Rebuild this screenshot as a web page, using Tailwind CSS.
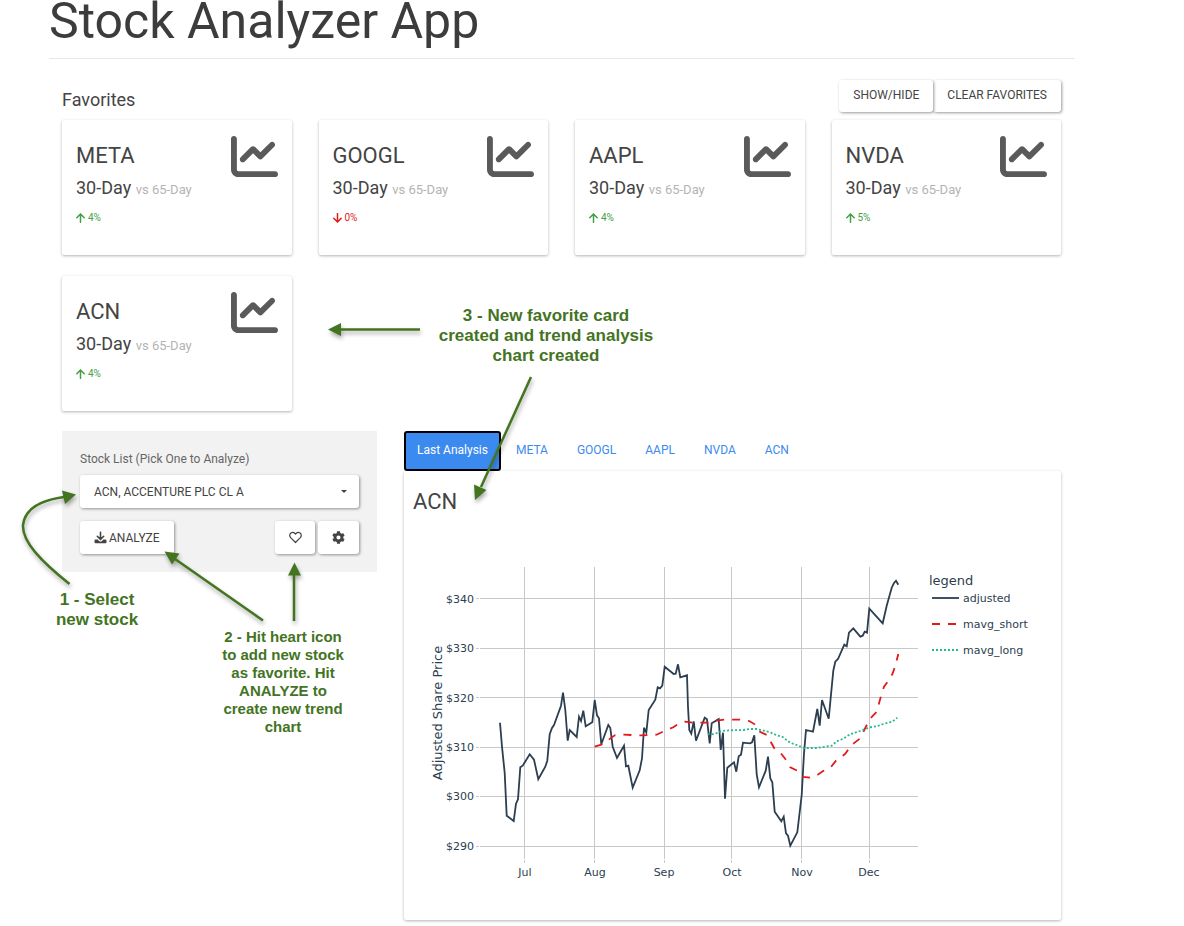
<!DOCTYPE html>
<html lang="en">

<head>
    <meta charset="UTF-8">
    <meta name="viewport" content="width=device-width, initial-scale=1.0">
    <title>Stock Analyzer App</title>
    <script src="https://cdn.jsdelivr.net/npm/@tailwindcss/browser@4"></script>
</head>

<body class="relative bg-white font-[Roboto,sans-serif] text-[#444]">

<!-- shared icons -->
<svg class="hidden">
    <symbol id="chart-line" viewBox="0 0 512 512">
        <path fill="currentColor" d="M64 64c0-17.7-14.3-32-32-32S0 46.3 0 64V400c0 44.2 35.8 80 80 80H480c17.7 0 32-14.3 32-32s-14.3-32-32-32H80c-8.8 0-16-7.2-16-16V64zm406.6 86.6c12.5-12.5 12.5-32.8 0-45.3s-32.8-12.5-45.3 0L320 210.7l-57.4-57.4c-12.5-12.5-32.8-12.5-45.3 0l-112 112c-12.5 12.5-12.5 32.8 0 45.3s32.8 12.5 45.3 0L240 221.3l57.4 57.4c12.5 12.5 32.8 12.5 45.3 0l128-128z"/>
    </symbol>
    <symbol id="arrow-up" viewBox="0 0 10 10">
        <path fill="none" stroke="currentColor" stroke-width="1.5" stroke-linecap="round" stroke-linejoin="round" d="M4.500 9.300V1M.8 4.800L4.500 .9l3.700 3.900"/>
    </symbol>
    <symbol id="arrow-down" viewBox="0 0 10 10">
        <path fill="none" stroke="currentColor" stroke-width="1.5" stroke-linecap="round" stroke-linejoin="round" d="M4.500 .7V9M.8 5.200l3.700 3.900 3.700-3.900"/>
    </symbol>
</svg>

<div class="pl-[49px] pr-[109px] pb-[6px]">
    <h1 class="border-b border-[#e8e8e8] pb-4 text-[50px] leading-[42px] text-[#3c3c3c]">Stock Analyzer App</h1>

    <main class="pl-[13px] pr-[14px] pt-[21px]">
        <!-- favorites -->
        <div class="mb-2 flex items-end justify-between">
            <h2 class="text-lg leading-6">Favorites</h2>
            <div class="flex">
                <button class="relative z-10 h-8 rounded-[3px] bg-white px-[14px] pb-[2px] text-xs shadow-[1px_1px_3px_rgba(0,0,0,0.4)]">SHOW/HIDE</button>
                <button class="h-8 rounded-[3px] bg-white px-[14px] pb-[2px] text-xs shadow-[1px_1px_3px_rgba(0,0,0,0.4)]">CLEAR FAVORITES</button>
            </div>
        </div>

        <section class="grid grid-cols-4 gap-x-[27px] gap-y-[21px]">
            <article class="flex justify-between rounded-[2px] bg-white px-[14px] pt-[21px] pb-6 shadow-[0_1px_3px_rgba(0,0,0,0.3)]">
                <div>
                    <h3 class="text-[22px] leading-[30px]">META</h3>
                    <p class="text-lg leading-[34px]">30-Day <span class="text-[13px] leading-none text-[#b4b4b4]">vs 65-Day</span></p>
                    <p class="flex items-center gap-[2px] text-[10px] leading-[26px] text-[#43a047]"><svg class="size-[10px]"><use href="#arrow-up"/></svg>4%</p>
                </div>
                <svg class="-mt-2 size-[47px] text-[#5a5a5a]"><use href="#chart-line"/></svg>
            </article>
            <article class="flex justify-between rounded-[2px] bg-white px-[14px] pt-[21px] pb-6 shadow-[0_1px_3px_rgba(0,0,0,0.3)]">
                <div>
                    <h3 class="text-[22px] leading-[30px]">GOOGL</h3>
                    <p class="text-lg leading-[34px]">30-Day <span class="text-[13px] leading-none text-[#b4b4b4]">vs 65-Day</span></p>
                    <p class="flex items-center gap-[2px] text-[10px] leading-[26px] text-[#e31a1c]"><svg class="size-[10px]"><use href="#arrow-down"/></svg>0%</p>
                </div>
                <svg class="-mt-2 size-[47px] text-[#5a5a5a]"><use href="#chart-line"/></svg>
            </article>
            <article class="flex justify-between rounded-[2px] bg-white px-[14px] pt-[21px] pb-6 shadow-[0_1px_3px_rgba(0,0,0,0.3)]">
                <div>
                    <h3 class="text-[22px] leading-[30px]">AAPL</h3>
                    <p class="text-lg leading-[34px]">30-Day <span class="text-[13px] leading-none text-[#b4b4b4]">vs 65-Day</span></p>
                    <p class="flex items-center gap-[2px] text-[10px] leading-[26px] text-[#43a047]"><svg class="size-[10px]"><use href="#arrow-up"/></svg>4%</p>
                </div>
                <svg class="-mt-2 size-[47px] text-[#5a5a5a]"><use href="#chart-line"/></svg>
            </article>
            <article class="flex justify-between rounded-[2px] bg-white px-[14px] pt-[21px] pb-6 shadow-[0_1px_3px_rgba(0,0,0,0.3)]">
                <div>
                    <h3 class="text-[22px] leading-[30px]">NVDA</h3>
                    <p class="text-lg leading-[34px]">30-Day <span class="text-[13px] leading-none text-[#b4b4b4]">vs 65-Day</span></p>
                    <p class="flex items-center gap-[2px] text-[10px] leading-[26px] text-[#43a047]"><svg class="size-[10px]"><use href="#arrow-up"/></svg>5%</p>
                </div>
                <svg class="-mt-2 size-[47px] text-[#5a5a5a]"><use href="#chart-line"/></svg>
            </article>
            <article class="flex justify-between rounded-[2px] bg-white px-[14px] pt-[21px] pb-6 shadow-[0_1px_3px_rgba(0,0,0,0.3)]">
                <div>
                    <h3 class="text-[22px] leading-[30px]">ACN</h3>
                    <p class="text-lg leading-[34px]">30-Day <span class="text-[13px] leading-none text-[#b4b4b4]">vs 65-Day</span></p>
                    <p class="flex items-center gap-[2px] text-[10px] leading-[26px] text-[#43a047]"><svg class="size-[10px]"><use href="#arrow-up"/></svg>4%</p>
                </div>
                <svg class="-mt-2 size-[47px] text-[#5a5a5a]"><use href="#chart-line"/></svg>
            </article>
        </section>

        <div class="mt-5 grid grid-cols-12 items-start gap-x-[27px]">
            <!-- stock picker -->
            <form class="col-span-4 bg-[#f2f2f2] p-[18px]">
                <label for="stock" class="block text-xs leading-5 text-[#666]">Stock List (Pick One to Analyze)</label>
                <div class="relative mt-[6px]">
                    <select id="stock" class="h-[33px] w-full appearance-none rounded-[3px] bg-white px-[14px] text-xs shadow-[1px_1px_3px_rgba(0,0,0,0.4)]">
                        <option>ACN, ACCENTURE PLC CL A</option>
                    </select>
                    <svg class="pointer-events-none absolute top-[15px] right-3 h-[3px] w-[6px]" viewBox="0 0 6 3"><path fill="currentColor" d="M0 0h6L3 3z"/></svg>
                </div>
                <div class="mt-[13px] flex justify-between">
                    <button type="button" class="flex h-[33px] items-center gap-[2px] rounded-[3px] bg-white px-[14px] text-xs shadow-[1px_1px_3px_rgba(0,0,0,0.4)]">
                        <svg class="size-[13px]" viewBox="0 0 13 13">
                            <path fill="none" stroke="currentColor" stroke-width="1.6" stroke-linecap="round" stroke-linejoin="round" d="M6.500 1.200v6.800M3.300 5.300l3.200 3.100 3.200-3.100"/>
                            <path fill="currentColor" d="M1.600 8.600h2.100l1.300 1.300a2.200 2.200 0 0 0 3 0l1.300-1.300h2.100a1.100 1.100 0 0 1 1.100 1.100v1.500a1.100 1.100 0 0 1-1.100 1.100H1.600a1.100 1.100 0 0 1-1.100-1.100V9.700a1.100 1.100 0 0 1 1.100-1.100z"/>
                        </svg>
                        ANALYZE
                    </button>
                    <div class="flex gap-[3px]">
                        <button type="button" aria-label="Add to favorites" class="flex h-[33px] w-10 items-center justify-center rounded-[3px] bg-white shadow-[1px_1px_3px_rgba(0,0,0,0.4)]">
                            <svg class="size-[13px]" viewBox="0 0 13 13"><path fill="none" stroke="currentColor" stroke-width="1.200" stroke-linejoin="round" d="M6.500 11.500L1.700 6.700C.3 5.200.5 3 1.900 2c1.300-1 3-.7 4.100.5l.5.6.5-.6C8.100 1.300 9.800 1 11.100 2c1.400 1 1.600 3.200.2 4.700z"/></svg>
                        </button>
                        <button type="button" aria-label="Settings" class="flex h-[33px] w-[41px] items-center justify-center rounded-[3px] bg-white shadow-[1px_1px_3px_rgba(0,0,0,0.4)]">
                            <svg class="size-[13px]" viewBox="0 0 512 512"><path fill="currentColor" d="M487.4 315.7l-42.6-24.6c4.3-23.2 4.3-47 0-70.2l42.6-24.6c4.9-2.8 7.1-8.6 5.5-14-11.1-35.6-30-67.8-54.7-94.6-3.8-4.1-10-5.1-14.8-2.3L380.8 110c-17.9-15.4-38.5-27.3-60.8-35.1V25.8c0-5.6-3.9-10.5-9.4-11.7-36.7-8.2-74.3-7.8-109.2 0-5.5 1.2-9.4 6.1-9.4 11.7V75c-22.2 7.9-42.8 19.8-60.8 35.1L88.7 85.5c-4.9-2.8-11-1.9-14.8 2.3-24.7 26.7-43.6 58.9-54.7 94.6-1.7 5.4.6 11.2 5.5 14L67.3 221c-4.3 23.2-4.3 47 0 70.2l-42.6 24.6c-4.9 2.8-7.1 8.6-5.5 14 11.1 35.6 30 67.8 54.7 94.6 3.8 4.1 10 5.1 14.8 2.3l42.6-24.6c17.9 15.4 38.5 27.3 60.8 35.1v49.2c0 5.6 3.9 10.5 9.4 11.7 36.7 8.2 74.3 7.8 109.2 0 5.5-1.2 9.4-6.1 9.4-11.7v-49.2c22.2-7.9 42.8-19.8 60.8-35.1l42.6 24.6c4.9 2.8 11 1.9 14.8-2.3 24.7-26.7 43.600-58.900 54.700-94.600 1.500-5.500-.7-11.300-5.600-14.100zM256 336c-44.100 0-80-35.900-80-80s35.900-80 80-80 80 35.900 80 80-35.900 80-80 80z"/></svg>
                        </button>
                    </div>
                </div>
            </form>

            <!-- analysis -->
            <section class="col-span-8">
                <nav class="flex h-10 gap-[1px] text-xs text-[#3b8af0]">
                    <a href="#" class="flex items-center rounded-[3px] border-2 border-black bg-[#3b8af0] px-[11px] pb-[2px] text-white">Last Analysis</a>
                    <a href="#" class="flex items-center px-[14px] pb-[2px]">META</a>
                    <a href="#" class="flex items-center px-[14px] pb-[2px]">GOOGL</a>
                    <a href="#" class="flex items-center px-[14px] pb-[2px]">AAPL</a>
                    <a href="#" class="flex items-center px-[14px] pb-[2px]">NVDA</a>
                    <a href="#" class="flex items-center px-[14px] pb-[2px]">ACN</a>
                </nav>
                <div class="rounded-[2px] bg-white px-[9px] pt-4 shadow-[0_1px_3px_rgba(0,0,0,0.3)]">
                    <h3 class="text-[22px] leading-[30px]">ACN</h3>
                    <svg class="block w-full" viewBox="413 517 639 403" font-family="'DejaVu Sans', sans-serif" font-size="11" fill="#2c3e50">
                        <g stroke="#c8c8c8">
                            <path d="M480 598.500H918M480 648.500H918M480 697.500H918M480 747.500H918M480 796.500H918M480 846.500H918"/>
                            <path d="M524.500 567V859M594.500 567V859M664.500 567V859M731.500 567V859M801.500 567V859M869.500 567V859"/>
                            <path d="M476 598.500h3M476 648.500h3M476 697.500h3M476 747.500h3M476 796.500h3M476 846.500h3"/>
                            <path d="M524.500 860v3M594.500 860v3M664.500 860v3M731.500 860v3M801.500 860v3M869.500 860v3"/>
                        </g>
                        <g fill="none" stroke-width="1.800">
                            <polyline stroke="#2c3e50" points="500,722.7 502,746.7 504.7,773 506.7,815.7 513.7,821 516,803.7 518,799.3 520.3,767.3 522.7,765.7 529.7,754.3 534,759.7 538.3,779.3 545.3,766.7 547.3,760.7 549.7,734.3 552,728 554,725 561,705.7 563,692.7 565.3,710 567.7,740.7 569.7,730 576.7,737 579,716.7 581,721 583.3,710.7 585.7,726.3 592.3,722.3 594.7,700 597,715.3 599,718.3 601.3,744.3 608.3,725 610.3,728 612.7,746.7 617,758 624,745.7 626,766.3 628.3,765.7 632.7,787.7 639.7,770.3 642,758.3 644,727.7 646.3,732.7 648.7,710 655.3,699.7 657.7,687.3 660,688.3 662.3,685.7 664.7,666.7 673.7,674 675.7,673.7 678,664.3 680.3,677.3 687,675.3 688,706.7 689.3,730 691.3,733.7 693.7,721.3 696,740.7 704.7,717.7 707,719.3 709.7,743.3 711.7,723.3 718.7,719 720.7,750 723,732.7 725,798.7 727.3,767.7 734,762.3 736.3,771.7 738.7,756.3 741,754.7 743,742.7 750,743.3 752,742.3 754.3,735.3 756.7,774.3 759,787.3 765.7,770.7 768,756.7 770.3,778.3 772.3,782.3 774.7,811.7 781.3,821.3 783.7,816.7 786,833.3 788,835.7 790.3,845.7 797.3,832.3 801.7,795 804,753.3 806,730 813,731.7 817.3,709 819.7,725.7 822,700 828.7,718.7 833.3,670.7 835.3,661.7 838,659 844.3,644.7 846.7,646.3 849,632.7 853.3,628.3 860.3,636.7 862.7,635.7 864.7,631.7 867,632.7 869.3,608.7 882.7,623.3 886.7,605.7 891.7,587.7 894,583 896,580.7 898.3,584.7"/>
                            <polyline stroke="#e31a1c" stroke-dasharray="8 8" points="594.7,746.7 601.3,744.7 608.3,740 614.7,735.3 623.3,734.7 640,735.3 656.7,734.7 662.3,732 673.3,727.3 677.3,724.7 685.3,721.7 693.3,722.7 708.3,722.7 716.7,720.7 724,719.7 740,719.7 749.3,721 754.7,724.3 760,731.7 766.7,735 770.7,741.7 774.7,749 781.7,754.3 786.3,760.3 790.3,767.3 797.3,770.7 803.3,777 811.7,777.7 817.7,774.7 822.7,771.3 824.7,770.3 831.7,766 836,760.7 845,754 848.7,749 853.7,743.3 860.3,738.3 864.3,730 867.3,724 870.7,718 876.7,711.7 879.3,702.3 881.3,695 884,686.7 888,681.3 892.3,674.3 895,666.7 898.3,654"/>
                            <polyline stroke="#22b890" stroke-dasharray="2 2" points="707.7,734.3 714.3,734 721.7,731 730,730.3 743.3,730 750,729 756.7,729 765,731 770,732.3 776.7,735.3 782.7,737 790,742.7 796.7,745 804,748 816.7,748 831.7,745.7 836.7,741.3 843.3,738.7 850,734.3 860,731 870,727.3 876.7,726.3 883.3,724 892.3,721.7 897.3,717.7"/>
                            <path stroke="#2c3e50" d="M932 598h27"/>
                            <path stroke="#e31a1c" stroke-dasharray="8 8" d="M932 624h27"/>
                            <path stroke="#22b890" stroke-dasharray="2 2" d="M932 650h27"/>
                        </g>
                        <g text-anchor="end">
                            <text x="474" y="603">$340</text>
                            <text x="474" y="652">$330</text>
                            <text x="474" y="702">$320</text>
                            <text x="474" y="751">$310</text>
                            <text x="474" y="800">$300</text>
                            <text x="474" y="850">$290</text>
                        </g>
                        <g text-anchor="middle">
                            <text x="525" y="876">Jul</text>
                            <text x="595" y="876">Aug</text>
                            <text x="664" y="876">Sep</text>
                            <text x="732" y="876">Oct</text>
                            <text x="802" y="876">Nov</text>
                            <text x="869" y="876">Dec</text>
                            <text transform="translate(442 713) rotate(-90)" font-size="13">Adjusted Share Price</text>
                        </g>
                        <text x="929" y="585" font-size="13">legend</text>
                        <text x="963" y="602">adjusted</text>
                        <text x="963" y="628">mavg_short</text>
                        <text x="963" y="654">mavg_long</text>
                    </svg>
                </div>
            </section>
        </div>
    </main>
</div>

<!-- walkthrough notes over the page -->
<svg class="pointer-events-none absolute top-0 left-0 z-20 h-[640px] w-[700px] drop-shadow-[1px_3px_2px_rgba(0,0,0,0.35)]" viewBox="0 0 700 640" fill="#43741f">
    <g fill="none" stroke="#43741f" stroke-width="2.500">
        <path d="M420 329.500H340M531 377L481 487M263 620.500L175 559M294 621V574"/>
        <path d="M69.500 584C42 562 22 542 23 525C25 508 42 500 64 497"/>
    </g>
    <path d="M328 329.500l13-6.500v13zM475 500l-1-15.500 12.500 5.500zM164.500 551.500l15 2-7.500 11zM294.500 562.500l6.500 13h-13zM76 494.500l-14-4 3 13.500z"/>
</svg>
<div class="pointer-events-none font-[Liberation_Sans,Arial,sans-serif] font-bold text-center text-[#43741f]">
    <p class="absolute top-[306px] left-[426px] z-20 w-60 text-[17px] leading-5">3 - New favorite card<br>created and trend analysis<br>chart created</p>
    <p class="absolute top-[590px] left-[47px] z-20 w-[100px] text-[17px] leading-5">1 - Select<br>new stock</p>
    <p class="absolute top-[628px] left-[213px] z-20 w-[140px] text-[15px] leading-[18px]">2 - Hit heart icon<br>to add new stock<br>as favorite. Hit<br>ANALYZE to<br>create new trend<br>chart</p>
</div>

</body>

</html>
